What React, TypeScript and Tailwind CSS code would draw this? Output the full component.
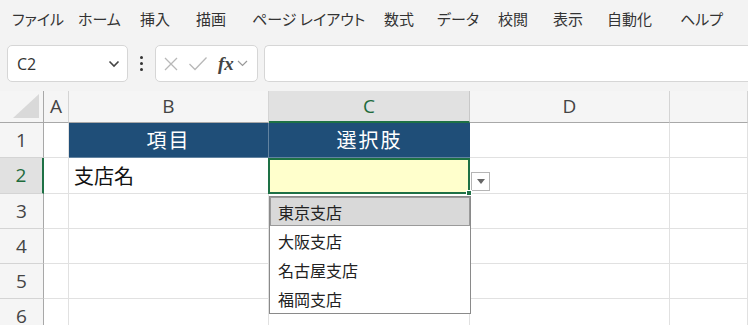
import React from "react";

const menu: [string, number][] = [
  ["ファイル", 66],
  ["ホーム", 62],
  ["挿入", 56],
  ["描画", 56],
  ["ページ レイアウト", 132],
  ["数式", 53],
  ["データ", 61],
  ["校閲", 55],
  ["表示", 54],
  ["自動化", 73],
  ["ヘルプ", 60],
];

const jp = "[font-family:'Noto_Sans_CJK_JP','Noto_Sans',sans-serif]";

function Cell({
  children,
  className = "",
}: {
  children?: React.ReactNode;
  className?: string;
}) {
  return (
    <div className={`border-r border-b border-[#e1e1e1] flex items-center ${className}`}>
      {children}
    </div>
  );
}

function RowHead({ n, selected }: { n: number; selected?: boolean }) {
  return (
    <div
      className={`flex items-center justify-center border-b border-[#d4d4d4] border-r text-[19px] [font-family:'Open_Sans','Noto_Sans',sans-serif] ${
        selected
          ? "bg-[#e1e1e1] text-[#1e6b3c] border-r-[#1e7145] border-r-2"
          : "bg-[#f5f5f5] text-[#444] border-r-[#a8a8a8]"
      }`}
    >
      {n}
    </div>
  );
}

export default function App() {
  const rows = [3, 4, 5, 6];
  return (
    <div className={`relative w-[748px] h-[325px] overflow-hidden bg-white ${jp}`}>
      {/* Menu bar */}
      <div className="flex h-[38px] items-center bg-[#f3f3f3] pl-[12px] text-[15px] text-[#333] [font-feature-settings:'palt']">
        {menu.map(([t, w]) => (
          <div key={t} style={{ width: w }} className="shrink-0 whitespace-nowrap leading-none pb-[2px]">
            {t}
          </div>
        ))}
      </div>
      {/* Toolbar */}
      <div className="flex h-[53px] items-start bg-[#f3f3f3] pt-[7px] pl-[7px]">
        <div className="flex h-[37px] w-[121px] items-center justify-between rounded-[5px] border border-[#d6d6d6] bg-white pl-[9px] pr-[7px] text-[16px] text-[#333] [font-family:'Open_Sans',sans-serif]">
          <span>C2</span>
          <svg width="12" height="8" viewBox="0 0 12 8">
            <path d="M1.5 1.5 L6 6 L10.5 1.5" fill="none" stroke="#444" strokeWidth="1.6" />
          </svg>
        </div>
        <div className="flex h-[37px] w-[27px] flex-col items-center justify-center gap-[3px]">
          <div className="h-[3px] w-[3px] rounded-full bg-[#333]" />
          <div className="h-[3px] w-[3px] rounded-full bg-[#333]" />
          <div className="h-[3px] w-[3px] rounded-full bg-[#333]" />
        </div>
        <div className="flex h-[37px] w-[103px] items-center rounded-[5px] border border-[#d6d6d6] bg-white pl-[7px]">
          <svg width="16" height="16" viewBox="0 0 16 16">
            <path d="M2 2 L14 14 M14 2 L2 14" stroke="#b8b8b8" strokeWidth="1.3" />
          </svg>
          <svg width="20" height="15" viewBox="0 0 20 15" className="ml-[9px]">
            <path d="M1.5 8 L7 13.5 L18.5 1.5" fill="none" stroke="#b8b8b8" strokeWidth="1.3" />
          </svg>
          <span className="ml-[10px] text-[19px] font-bold italic text-[#444] [font-family:'Liberation_Serif',serif] leading-none">
            fx
          </span>
          <svg width="11" height="7" viewBox="0 0 11 7" className="ml-[3px]">
            <path d="M1 1 L5.5 5.5 L10 1" fill="none" stroke="#999" strokeWidth="1.2" />
          </svg>
        </div>
        <div className="ml-[6px] h-[37px] flex-1 rounded-l-[5px] border border-r-0 border-[#d6d6d6] bg-white" />
      </div>

      {/* Grid */}
      <div className="grid grid-cols-[44px_25px_200px_201px_200px_1fr] grid-rows-[32px_35px_36px_35px_35px_35px_35px]">
        {/* header row */}
        <div className="relative border-r border-b border-[#a8a8a8] bg-[#f5f5f5]">
          <svg width="26" height="24" viewBox="0 0 26 24" className="absolute right-[4px] bottom-[4px]">
            <path d="M26 0 L26 24 L0 24 Z" fill="#d9d9d9" />
          </svg>
        </div>
        {["A", "B"].map((c) => (
          <div
            key={c}
            className="flex items-center justify-center border-r border-b border-r-[#d4d4d4] border-b-[#a8a8a8] bg-[#f5f5f5] text-[19px] text-[#444] [font-family:'Open_Sans',sans-serif]"
          >
            {c}
          </div>
        ))}
        <div className="flex items-center justify-center border-r border-b-2 border-r-[#c8c8c8] border-b-[#1e7145] bg-[#e1e1e1] text-[19px] text-[#1e6b3c] [font-family:'Open_Sans',sans-serif]">
          C
        </div>
        {["D", ""].map((c, i) => (
          <div
            key={i}
            className="flex items-center justify-center border-r border-b border-r-[#d4d4d4] border-b-[#a8a8a8] bg-[#f5f5f5] text-[19px] text-[#444] [font-family:'Open_Sans',sans-serif]"
          >
            {c}
          </div>
        ))}

        {/* row 1 */}
        <RowHead n={1} />
        <Cell />
        <div className="flex items-center justify-center border-r border-b border-[#fff]/30 bg-[#1f4e78] text-[20px] tracking-[2px] text-white">
          項目
        </div>
        <div className="flex items-center justify-center border-b border-[#fff]/30 bg-[#1f4e78] text-[20px] tracking-[2px] text-white">
          選択肢
        </div>
        <Cell />
        <Cell />

        {/* row 2 */}
        <RowHead n={2} selected />
        <Cell />
        <Cell className="pl-[5px] text-[20px] text-[#111]">支店名</Cell>
        <div className="relative border-2 border-[#1e7145] bg-[#ffffcc] -ml-[1px]">
          <div className="absolute -right-[4px] -bottom-[4px] h-[6px] w-[6px] bg-[#1e7145] border border-white" />
        </div>
        <Cell className="items-end pb-[2px] pl-[1px]">
          <div className="flex h-[19px] w-[19px] items-center justify-center border border-[#b5b5b5] bg-white">
            <svg width="8" height="5" viewBox="0 0 8 5">
              <path d="M0 0 L8 0 L4 5 Z" fill="#666" />
            </svg>
          </div>
        </Cell>
        <Cell />

        {rows.map((r) => (
          <React.Fragment key={r}>
            <RowHead n={r} />
            <Cell />
            <Cell />
            <Cell />
            <Cell />
            <Cell />
          </React.Fragment>
        ))}
      </div>

      {/* Dropdown list */}
      <div className="absolute left-[269px] top-[196px] w-[202px] border border-[#8a8a8a] bg-white text-[16px] text-[#222]">
        <div className="flex h-[29px] items-center border border-[#9a9a9a] bg-[#d9d9d9] pl-[7px]">東京支店</div>
        <div className="flex h-[29px] items-center pl-[8px]">大阪支店</div>
        <div className="flex h-[29px] items-center pl-[8px]">名古屋支店</div>
        <div className="flex h-[29px] items-center pl-[8px]">福岡支店</div>
      </div>
    </div>
  );
}
